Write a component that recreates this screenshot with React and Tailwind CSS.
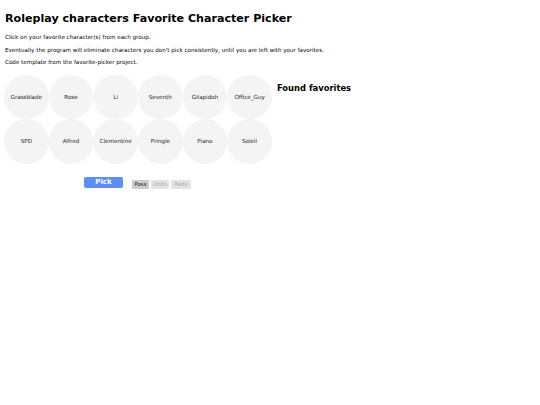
const GROUPS = [
  ["Grassblade", "Rose", "Li", "Seventh", "Gilapidoh", "Office_Guy"],
  ["SPD", "Alfred", "Clementine", "Pringle", "Piano", "Soleil"],
];

function Circle({ name }) {
  return (
    <div className="w-[44.67px] h-[44.67px] rounded-full bg-[#f4f4f4] flex items-center justify-center text-[5.6px] text-[#222]">
      {name}
    </div>
  );
}

export default function App() {
  return (
    <div className="min-h-[405px] bg-white px-[5px] pt-[10px] text-black font-['DejaVu_Sans',Verdana,sans-serif]">
      <h1 className="text-[11.1px] font-bold leading-[17px] mb-[4px]">Roleplay characters Favorite Character Picker</h1>
      <p className="text-[5.6px] leading-[12.5px]">Click on your favorite character(s) from each group.</p>
      <p className="text-[5.6px] leading-[12.5px]">Eventually the program will eliminate characters you don't pick consistently, until you are left with your favorites.</p>
      <p className="text-[5.6px] leading-[12.5px]">Code template from the favorite-picker project.</p>

      <div className="flex items-start gap-[5px] mt-[6px] -ml-px">
        <div className="flex flex-col">
          {GROUPS.map((row, i) => (
            <div key={i} className="flex">
              {row.map((n) => <Circle key={n} name={n} />)}
            </div>
          ))}
          <div className="flex items-start mt-[13px] ml-[80px]">
            <button className="w-[39px] h-[11px] rounded-[2px] bg-[#5b8ff4] text-white text-[7px] font-bold leading-none mr-[9px]">Pick</button>
            <button className="w-[17px] h-[9px] rounded-[1px] bg-[#cccccc] text-[#222] text-[5.4px] leading-none mr-[2px] mt-[3px]">Pass</button>
            <button className="w-[18px] h-[9px] rounded-[1px] bg-[#e3e3e3] text-[#aaa] text-[5.4px] leading-none mr-[2px] mt-[3px]">Undo</button>
            <button className="w-[20px] h-[9px] rounded-[1px] bg-[#e3e3e3] text-[#aaa] text-[5.4px] leading-none mt-[3px]">Redo</button>
          </div>
        </div>
        <h2 className="text-[8.4px] font-bold mt-[7px]">Found favorites</h2>
      </div>
    </div>
  );
}
